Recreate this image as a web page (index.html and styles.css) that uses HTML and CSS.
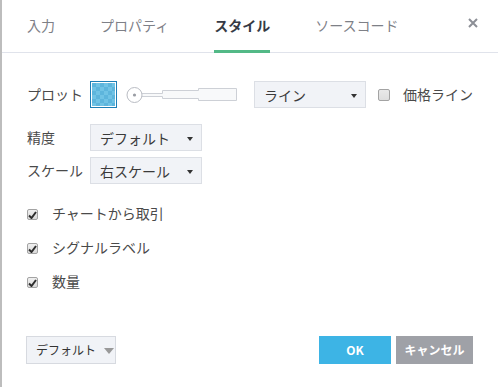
FILE: index.html
```html
<!DOCTYPE html>
<html lang="ja">
<head>
<meta charset="utf-8">
<link rel="stylesheet" href="styles.css">
</head>
<body>
<div class="dialog">
  <div class="tabs">
    <div class="tab">入力</div>
    <div class="tab">プロパティ</div>
    <div class="tab active">スタイル</div>
    <div class="tab">ソースコード</div>
    <div class="close"><svg width="10" height="10" viewBox="0 0 10 10"><path d="M1 1L9 9M9 1L1 9" stroke="#8c8f96" stroke-width="2"/></svg></div>
  </div>
  <div class="body">
    <div class="row row-plot">
      <div class="label">プロット</div>
      <div class="swatch"><div class="swatch-fill"></div></div>
      <svg class="width-slider" width="112" height="18" viewBox="0 0 112 18">
        <path d="M17 7.5H37.5V4.5H73.5V2.5H111.5V14.5H73.5V12.5H37.5V10.5H17" fill="#f8f9fa" stroke="#cdd0d6"/>
        <circle cx="9.5" cy="9" r="7.5" fill="#fff" stroke="#b9bcc3"/>
        <circle cx="9.5" cy="9" r="1.6" fill="#9a9da4"/>
      </svg>
      <div class="select select-line"><span>ライン</span><i class="caret"></i></div>
      <span class="box"></span>
      <span class="box-label">価格ライン</span>
    </div>
    <div class="row row-precision">
      <div class="label">精度</div>
      <div class="select"><span>デフォルト</span><i class="caret"></i></div>
    </div>
    <div class="row row-scale">
      <div class="label">スケール</div>
      <div class="select"><span>右スケール</span><i class="caret"></i></div>
    </div>
    <div class="checks">
      <div class="check"><span class="box checked"><svg width="9" height="8" viewBox="0 0 9 8"><path d="M1 4.5L3.5 7L8 1" fill="none" stroke="#2e2e2e" stroke-width="2"/></svg></span><span class="check-label">チャートから取引</span></div>
      <div class="check"><span class="box checked"><svg width="9" height="8" viewBox="0 0 9 8"><path d="M1 4.5L3.5 7L8 1" fill="none" stroke="#2e2e2e" stroke-width="2"/></svg></span><span class="check-label">シグナルラベル</span></div>
      <div class="check"><span class="box checked"><svg width="9" height="8" viewBox="0 0 9 8"><path d="M1 4.5L3.5 7L8 1" fill="none" stroke="#2e2e2e" stroke-width="2"/></svg></span><span class="check-label">数量</span></div>
    </div>
  </div>
  <div class="footer">
    <div class="btn-default"><span>デフォルト</span><i class="caret caret-gray"></i></div>
    <div class="actions">
      <div class="btn btn-ok">OK</div>
      <div class="btn btn-cancel">キャンセル</div>
    </div>
  </div>
</div>
</body>
</html>
```
FILE: styles.css
```css
html, body {
  margin: 0;
  padding: 0;
  background: #fff;
}
body {
  font-family: "Noto Sans CJK JP", "Noto Sans", sans-serif;
  font-size: 14px;
  color: #4a4a4a;
}
.dialog {
  width: 496px;
  height: 387px;
  border-left: 2px solid #bdbdbd;
  display: flex;
  flex-direction: column;
  box-sizing: content-box;
}
.tabs {
  height: 52px;
  border-bottom: 1px solid #e0e3eb;
  display: flex;
  align-items: stretch;
  padding-left: 25px;
  gap: 45px;
}
.tab {
  display: flex;
  align-items: center;
  box-sizing: border-box;
  height: 53px;
  margin-bottom: -1px;
  padding-bottom: 1px;
  border-bottom: 3px solid transparent;
  color: #7e8087;
  line-height: 1;
}
.tab.active {
  color: #363a45;
  font-weight: bold;
  border-bottom-color: #53b987;
}
.close {
  margin-left: auto;
  margin-right: 20px;
  display: flex;
  align-items: center;
  padding-bottom: 6px;
}
.body {
  padding: 28px 0 0 25px;
}
.row {
  display: flex;
  align-items: center;
  height: 27px;
}
.row-precision {
  margin-top: 16px;
}
.row-scale {
  margin-top: 6px;
}
.label {
  width: 63px;
  flex: none;
  line-height: 1;
  margin-top: -2px;
}
.swatch {
  width: 27px;
  height: 27px;
  box-sizing: border-box;
  border: 1px solid #1e7fb6;
  padding: 1px;
  background: #fff;
}
.swatch-fill {
  width: 100%;
  height: 100%;
  background: repeating-conic-gradient(#70c3e5 0 25%, #5db5dc 0 50%) 0 0 / 8px 8px;
}
.width-slider {
  margin-left: 8px;
  display: block;
}
.select {
  width: 112px;
  height: 27px;
  box-sizing: border-box;
  border: 1px solid #dcdfe5;
  background: #f1f3f7;
  display: flex;
  align-items: center;
  padding: 0 8px 0 9px;
  color: #3a3a3a;
  line-height: 1;
}
.select span {
  flex: 1;
}
.select-line {
  margin-left: 17px;
}
.caret {
  width: 0;
  height: 0;
  border-left: 3.5px solid transparent;
  border-right: 3.5px solid transparent;
  border-top: 4px solid #333;
  margin-top: 2px;
}
.caret-gray {
  border-left-width: 5px;
  border-right-width: 5px;
  border-top: 6px solid #999;
  margin-left: 8px;
  margin-top: 1px;
}
.box {
  width: 11px;
  height: 11px;
  box-sizing: border-box;
  border: 1px solid #a3a3a3;
  border-radius: 2px;
  background: linear-gradient(#f0f0f0, #dadada);
  display: inline-flex;
  align-items: center;
  justify-content: center;
  flex: none;
}
.row-plot .box {
  width: 12px;
  height: 12px;
  margin-left: 12px;
  background: linear-gradient(#e9e9e9, #dedede);
}
.box-label {
  margin-left: 13px;
  line-height: 1;
  margin-top: -2px;
}
.checks {
  margin-top: 12px;
}
.check {
  height: 34px;
  display: flex;
  align-items: center;
}
.check .box {
  margin-top: 3px;
}
.check-label {
  margin-left: 14px;
  line-height: 1;
}
.footer {
  margin-top: auto;
  display: flex;
  justify-content: space-between;
  align-items: center;
  padding: 0 25px 23px 24px;
}
.btn-default {
  width: 90px;
  height: 28px;
  box-sizing: border-box;
  border: 1px solid #d7dae0;
  background: #f1f3f7;
  display: flex;
  align-items: center;
  padding-left: 9px;
  font-size: 12px;
  color: #333;
  line-height: 1;
  white-space: nowrap;
}
.actions {
  display: flex;
  gap: 5px;
}
.btn {
  height: 28px;
  display: flex;
  align-items: center;
  justify-content: center;
  color: #fff;
  font-weight: bold;
  font-size: 12px;
  line-height: 1;
  white-space: nowrap;
}
.btn-ok {
  width: 72px;
  background: #3db4e5;
}
.btn-cancel {
  width: 77px;
  background: #9fa1a7;
}
```
